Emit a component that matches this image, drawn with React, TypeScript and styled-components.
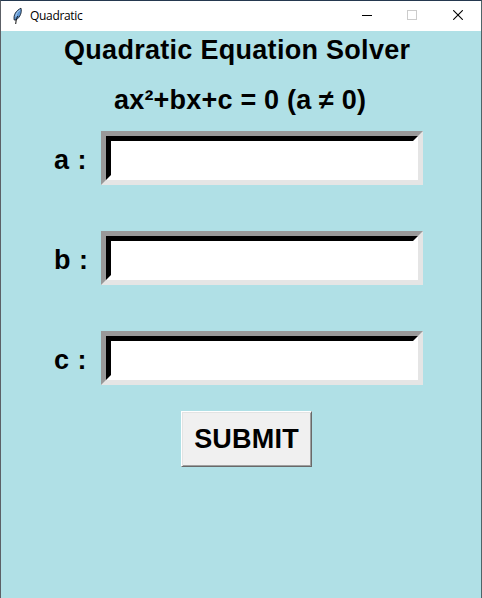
import React from 'react';
import styled, { createGlobalStyle } from 'styled-components';

const GlobalStyle = createGlobalStyle`
  * { box-sizing: border-box; }
  body { margin: 0; }
`;

const Window = styled.main`
  width: 482px;
  height: 598px;
  overflow: hidden;
  display: flex;
  flex-direction: column;
  background: #b0e0e6;
  border-top: 1px solid #24384f;
  border-left: 1px solid #5c6066;
  border-right: 1px solid #4f6468;
`;

const TitleBar = styled.header`
  height: 30px;
  flex: none;
  display: flex;
  align-items: center;
  background: #fff;
  padding-left: 10px;
`;

const Caption = styled.span`
  flex: 1;
  margin-left: 7px;
  font: 12px/16px "Open Sans", "Noto Sans", sans-serif;
  letter-spacing: -0.32px;
  color: #000;
`;

const WindowControl = styled.button<{ $width: number }>`
  width: ${(p) => p.$width}px;
  height: 30px;
  padding: 0 0 2px;
  border: 0;
  background: none;
  display: grid;
  place-items: center;
`;

const Content = styled.section`
  display: flex;
  flex-direction: column;
  font: bold 27px/38px "Liberation Sans", Arial, sans-serif;
  color: #000;
`;

const Heading = styled.h1<{ $indent: number; $tracking: number }>`
  margin: 0 0 12px;
  padding-left: ${(p) => p.$indent}px;
  height: 38px;
  font: inherit;
  white-space: pre;
  letter-spacing: ${(p) => p.$tracking}px;
`;

const Field = styled.label`
  display: grid;
  grid-template-columns: 47px 322px;
  height: 54px;
  margin-left: 53px;
  margin-bottom: 46px;
  align-items: center;
`;

const FieldName = styled.span`
  white-space: pre;
  height: 38px;
  line-height: 43px;
  word-spacing: 1px;
`;

const SunkenFrame = styled.span`
  display: flex;
  height: 54px;
  border: 5px solid;
  border-color: #999 #e5e5e5 #e5e5e5 #999;
`;

const Entry = styled.input`
  flex: 1;
  min-width: 0;
  padding: 0 4px;
  border: 5px solid;
  border-color: #000 #fff #fff #000;
  border-radius: 0;
  outline: 0;
  background: #fff;
  font: inherit;
`;

const SubmitButton = styled.button`
  width: 131px;
  height: 56px;
  margin: -20px 0 0 180px;
  padding: 0 0 1px;
  border: 1px solid;
  border-color: #fff #696969 #696969 #fff;
  box-shadow: inset 1px 1px #e3e3e3, inset -1px -1px #a0a0a0;
  background: #f0f0f0;
  color: #000;
  font: inherit;
  letter-spacing: 0.2px;
`;

const FeatherIcon = () => (
  <svg width="12" height="18" viewBox="0 0 12 18" aria-hidden="true">
    <path d="M3.2 13C2.2 8 5 3.5 10 1.2C11 5 9.5 10 5 13Z" fill="#5f97d4" stroke="#16202c" strokeWidth="0.9" />
    <path d="M4.8 9.5C5.3 6.5 7 4 9 3" fill="none" stroke="#b5d3ef" strokeWidth="1" />
    <path d="M7 9L5.4 11.5L4.7 17" fill="none" stroke="#111" strokeWidth="1" />
  </svg>
);

const fields = ['a', 'b', 'c'];

export default function App() {
  return (
    <>
      <GlobalStyle />
      <Window>
        <TitleBar>
          <FeatherIcon />
          <Caption>Quadratic</Caption>
          <WindowControl $width={44} aria-label="Minimize">
            <svg width="10" height="10" shapeRendering="crispEdges"><path d="M0 5.5H10" stroke="#000" /></svg>
          </WindowControl>
          <WindowControl $width={46} aria-label="Maximize" disabled>
            <svg width="10" height="10" shapeRendering="crispEdges"><path d="M.5.5H9.5V9.5H.5Z" fill="none" stroke="#ccc" /></svg>
          </WindowControl>
          <WindowControl $width={46} aria-label="Close">
            <svg width="10" height="10"><path d="M.2.2L9.8 9.8M9.8.2L.2 9.8" stroke="#000" strokeWidth="1.1" /></svg>
          </WindowControl>
        </TitleBar>
        <Content>
          <Heading $indent={63} $tracking={0.29}>Quadratic Equation Solver</Heading>
          <Heading as="h2" $indent={113} $tracking={0.2}>ax²+bx+c = 0 (a ≠ 0)</Heading>
          {fields.map((name) => (
            <Field key={name}>
              <FieldName>{name} :</FieldName>
              <SunkenFrame>
                <Entry aria-label={name} />
              </SunkenFrame>
            </Field>
          ))}
          <SubmitButton>SUBMIT</SubmitButton>
        </Content>
      </Window>
    </>
  );
}
